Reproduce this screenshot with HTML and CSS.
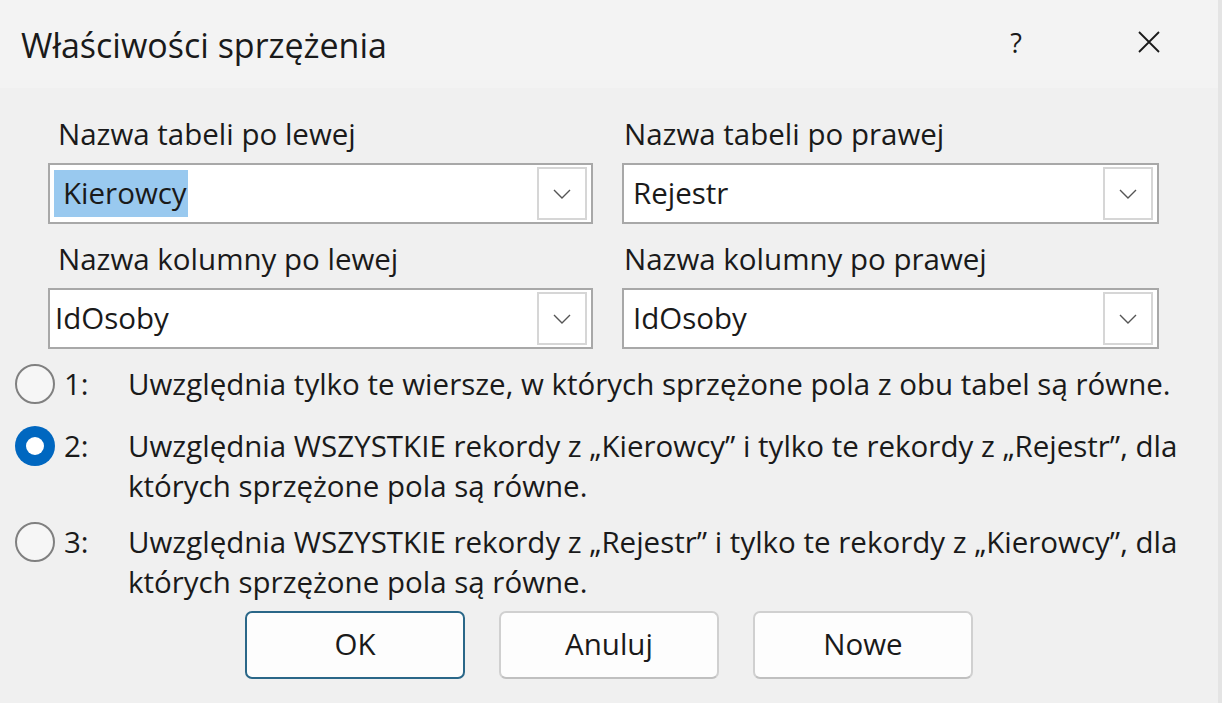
FILE: index.html
```html
<!DOCTYPE html>
<html lang="pl">
<head>
<meta charset="utf-8">
<title>Właściwości sprzężenia</title>
<link rel="stylesheet" href="styles.css">
</head>
<body>
<div class="dialog">
  <header class="titlebar">
    <div class="title">Właściwości sprzężenia</div>
    <div class="help">?</div>
    <div class="close">
      <svg width="22" height="22" viewBox="0 0 22 22"><path d="M1 1 L21 21 M21 1 L1 21" stroke="#1a1a1a" stroke-width="1.8" fill="none"/></svg>
    </div>
  </header>
  <main class="content">
    <div class="fields">
      <div class="field left">
        <label class="label">Nazwa tabeli po lewej</label>
        <div class="combo">
          <span class="value"><span class="selected">Kierowcy</span></span>
          <span class="drop"><svg width="20" height="12" viewBox="0 0 20 12"><path d="M2 2 L10 10 L18 2" stroke="#555" stroke-width="1.4" fill="none"/></svg></span>
        </div>
      </div>
      <div class="field right">
        <label class="label">Nazwa tabeli po prawej</label>
        <div class="combo">
          <span class="value">Rejestr</span>
          <span class="drop"><svg width="20" height="12" viewBox="0 0 20 12"><path d="M2 2 L10 10 L18 2" stroke="#555" stroke-width="1.4" fill="none"/></svg></span>
        </div>
      </div>
      <div class="field left">
        <label class="label">Nazwa kolumny po lewej</label>
        <div class="combo">
          <span class="value">IdOsoby</span>
          <span class="drop"><svg width="20" height="12" viewBox="0 0 20 12"><path d="M2 2 L10 10 L18 2" stroke="#555" stroke-width="1.4" fill="none"/></svg></span>
        </div>
      </div>
      <div class="field right">
        <label class="label">Nazwa kolumny po prawej</label>
        <div class="combo">
          <span class="value">IdOsoby</span>
          <span class="drop"><svg width="20" height="12" viewBox="0 0 20 12"><path d="M2 2 L10 10 L18 2" stroke="#555" stroke-width="1.4" fill="none"/></svg></span>
        </div>
      </div>
    </div>
    <div class="options">
      <div class="option o1">
        <span class="radio"></span>
        <span class="num">1:</span>
        <span class="text">Uwzględnia tylko te wiersze, w których sprzężone pola z obu tabel są równe.</span>
      </div>
      <div class="option o2">
        <span class="radio checked"></span>
        <span class="num">2:</span>
        <span class="text">Uwzględnia WSZYSTKIE rekordy z „Kierowcy” i tylko te rekordy z „Rejestr”, dla których sprzężone pola są równe.</span>
      </div>
      <div class="option o3">
        <span class="radio"></span>
        <span class="num">3:</span>
        <span class="text">Uwzględnia WSZYSTKIE rekordy z „Rejestr” i tylko te rekordy z „Kierowcy”, dla których sprzężone pola są równe.</span>
      </div>
    </div>
    <div class="buttons">
      <button class="btn default">OK</button>
      <button class="btn">Anuluj</button>
      <button class="btn">Nowe</button>
    </div>
  </main>
</div>
</body>
</html>
```
FILE: styles.css
```css
* { box-sizing: border-box; }
html, body { margin: 0; padding: 0; }
body {
  width: 1222px;
  height: 703px;
  overflow: hidden;
  background: #f0f0f0;
  font-family: "Open Sans", "Noto Sans", sans-serif;
  color: #1a1a1a;
}
.dialog {
  width: 1222px;
  height: 703px;
  border-right: 4px solid #e4e4e4;
  background: #f0f0f0;
}
.titlebar {
  height: 88px;
  background: #f3f3f3;
  display: flex;
  align-items: center;
  padding-left: 21px;
}
.title {
  font-size: 34px;
  flex: 1;
  margin-top: 2px;
}
.help {
  font-size: 27px;
  width: 30px;
  margin-right: 107px;
  margin-top: -4px;
  text-align: center;
}
.close {
  width: 22px;
  height: 22px;
  margin-right: 58px;
  margin-top: -4px;
}
.fields {
  display: grid;
  grid-template-columns: 545px 537px;
  column-gap: 29px;
  padding-left: 48px;
  padding-top: 28px;
  row-gap: 17px;
}
.field { display: flex; flex-direction: column; }
.label {
  font-size: 29.5px;
  line-height: 35px;
  height: 47px;
}
.left .label { padding-left: 10px; }
.right .label { padding-left: 2px; }
.combo {
  height: 61px;
  background: #fff;
  border: 2px solid #a8a8a8;
  display: flex;
  align-items: center;
  padding: 0 4px 0 4px;
}
.value {
  flex: 1;
  font-size: 29.5px;
  padding-left: 1px;
  padding-bottom: 3px;
}
.right .value { padding-left: 5px; }
.selected {
  background: #99c9ef;
  padding: 2px 1px 4px 9px;
  margin-left: -1px;
}
.drop {
  width: 50px;
  height: 53px;
  border: 2px solid #d6d6d6;
  display: flex;
  align-items: center;
  justify-content: center;
}
.options {
  padding-top: 15px;
}
.option {
  display: flex;
  align-items: flex-start;
  font-size: 29.5px;
  line-height: 40px;
  padding-left: 15px;
}
.option.o1 { height: 62px; }
.option.o2 { height: 96px; }
.option.o3 { height: 89px; }
.radio {
  width: 40px;
  height: 40px;
  border: 2px solid #808080;
  border-radius: 50%;
  flex: none;
  background: #f6f6f6;
  position: relative;
}
.radio.checked {
  border: none;
  background: #0067c0;
}
.radio.checked::after {
  content: "";
  position: absolute;
  left: 11px;
  top: 11px;
  width: 18px;
  height: 18px;
  border-radius: 50%;
  background: #fff;
}
.num {
  width: 73px;
  padding-left: 9px;
  flex: none;
}
.text {
  width: 1085px;
}
.buttons {
  display: flex;
  gap: 34px;
  padding-left: 245px;
}
.btn {
  width: 220px;
  height: 68px;
  background: #fdfdfd;
  border: 2px solid #d0d0d0;
  border-bottom-color: #c0c0c0;
  border-radius: 7px;
  font-family: "Open Sans", "Noto Sans", sans-serif;
  font-size: 29.5px;
  color: #1a1a1a;
  padding: 0 0 3px 0;
}
.btn.default {
  border: 2px solid #2a6788;
}
```
